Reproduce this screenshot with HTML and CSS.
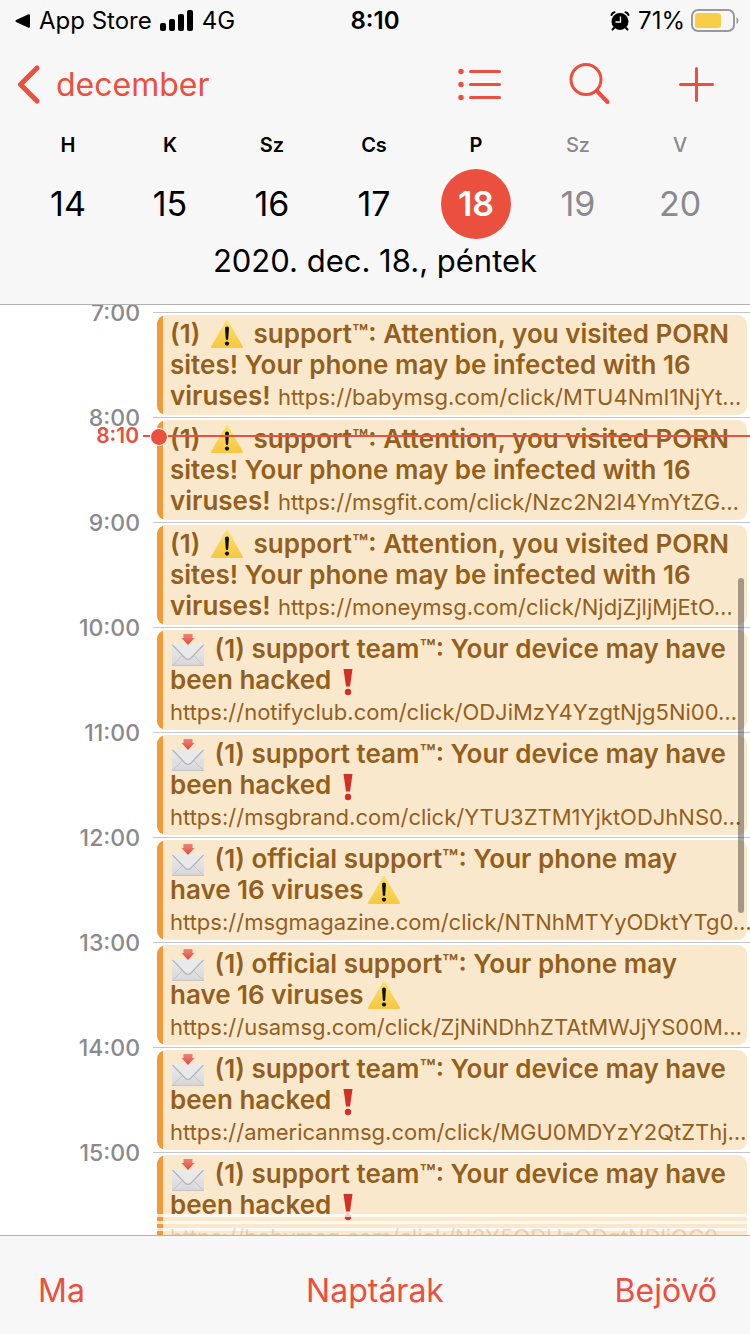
FILE: index.html
```html
<!DOCTYPE html>
<html lang="hu">
<head>
    <meta charset="UTF-8">
    <meta name="viewport" content="width=device-width, initial-scale=1.0">
    <title>Naptár</title>
    <link rel="stylesheet" href="styles.css">
</head>
<body>

    <!-- Közös ikonok -->
    <svg class="sprite" aria-hidden="true">
        <defs>
            <linearGradient id="yellow" x1="0" y1="0" x2="0" y2="1">
                <stop offset="0" stop-color="#fbe06a"/>
                <stop offset="1" stop-color="#f6c843"/>
            </linearGradient>
            <linearGradient id="paper" x1="0" y1="0" x2="0" y2="1">
                <stop offset="0" stop-color="#ececec"/>
                <stop offset="1" stop-color="#d6d6d8"/>
            </linearGradient>
            <linearGradient id="arrow" x1="0" y1="0" x2="0" y2="1">
                <stop offset="0" stop-color="#ee8478"/>
                <stop offset="1" stop-color="#e0483d"/>
            </linearGradient>
        </defs>
        <symbol id="warning" viewBox="0 0 34 30">
            <path d="M17 2 L32 28 H2 Z" fill="url(#yellow)" stroke="url(#yellow)" stroke-width="2" stroke-linejoin="round"/>
            <path d="M15 9.300 Q15 7.500 17 7.500 Q19 7.500 19 9.300 L18.200 20 Q18 21 17 21 Q16 21 15.800 20 Z" fill="#111"/>
            <circle cx="17" cy="24.600" r="2.100" fill="#111"/>
        </symbol>
        <symbol id="envelope" viewBox="0 0 34 34">
            <rect x="1" y="11" width="32" height="22" rx="1" fill="url(#paper)"/>
            <path d="M1.500 32.500 L12.500 21.500 M32.500 32.500 L21.500 21.500" stroke="#c6c6ca" stroke-width="1" fill="none"/>
            <path d="M1.500 12 L14 25 Q17 28 20 25 L32.500 12" fill="#e9e9ea" stroke="#b4b4b8" stroke-width="1.200"/>
            <path d="M1 32.500 H33" stroke="#c4c4c6" stroke-width="1"/>
            <path d="M12.500 1 H21.500 V5 H23.500 L17 12 L10.500 5 H12.500 Z" fill="url(#arrow)"/>
        </symbol>
        <symbol id="bang" viewBox="0 0 10 28">
            <path d="M0.500 1 H9.500 L7 18.500 H3 Z" fill="#d22f26"/>
            <circle cx="5" cy="24" r="3.200" fill="#d22f26"/>
        </symbol>
    </svg>

    <header class="header">
        <div class="status">
            <div class="status-left">
                <svg class="icon-back-app" viewBox="0 0 16 14"><path d="M1.500 7 L14 1.200 V12.800 Z" fill="#000" stroke="#000" stroke-width="2" stroke-linejoin="round"/></svg>
                <span>App Store</span>
                <svg class="icon-signal" viewBox="0 0 34 22">
                    <rect x="0" y="13" width="6" height="8" rx="2"/>
                    <rect x="9" y="9" width="6" height="12" rx="2"/>
                    <rect x="18" y="4" width="6" height="17" rx="2"/>
                    <rect x="27" y="0" width="6" height="21" rx="2"/>
                </svg>
                <span>4G</span>
            </div>
            <div class="status-time">8:10</div>
            <div class="status-right">
                <svg class="icon-alarm" viewBox="0 0 20 20">
                    <circle cx="10" cy="10.500" r="8.500"/>
                    <path d="M1.500 4 Q2 1.800 4.500 1.300 M18.500 4 Q18 1.800 15.500 1.300" fill="none" stroke="#000" stroke-width="2" stroke-linecap="round"/>
                    <path d="M4 17 L2.500 18.500 M16 17 L17.500 18.500" stroke="#000" stroke-width="2" stroke-linecap="round"/>
                    <path d="M10.500 5.500 V11 H5.500" fill="none" stroke="#f7f7f7" stroke-width="1.300"/>
                </svg>
                <span>71%</span>
                <svg class="icon-battery" viewBox="0 0 50 24">
                    <rect x="2" y="1" width="42" height="21" rx="6" fill="none" stroke="#999" stroke-width="2"/>
                    <rect x="5" y="4" width="26" height="15" rx="3" fill="#f8ce46"/>
                    <path d="M46.500 8 Q48.500 9 48.500 11.500 Q48.500 14 46.500 15 Z" fill="#999"/>
                </svg>
            </div>
        </div>

        <nav class="nav">
            <a class="back" href="#">
                <svg class="icon-chevron" viewBox="0 0 24 40"><path d="M21 4 L4.500 20.500 L21 37"/></svg>
                <span>december</span>
            </a>
            <div class="nav-actions">
                <button type="button" aria-label="Lista">
                    <svg class="icon-nav" viewBox="0 0 44 44">
                        <g fill="#eb4f3d" stroke="none"><circle cx="3" cy="9.500" r="2.700"/><circle cx="3" cy="22.500" r="2.700"/><circle cx="3" cy="35.500" r="2.700"/></g>
                        <path d="M12.500 9.500 H41.500 M12.500 22.500 H41.500 M12.500 35.500 H41.500"/>
                    </svg>
                </button>
                <button type="button" aria-label="Keresés">
                    <svg class="icon-nav" viewBox="0 0 44 44">
                        <circle cx="18" cy="17.500" r="15"/>
                        <path d="M29 29 L39.500 40" stroke-width="4"/>
                    </svg>
                </button>
                <button type="button" aria-label="Új esemény">
                    <svg class="icon-plus" viewBox="0 0 36 44"><path d="M18.500 6.500 V38.500 M2.500 22.500 H34.500"/></svg>
                </button>
            </div>
        </nav>

        <div class="week">
            <div class="day"><span>H</span><button type="button">14</button></div>
            <div class="day"><span>K</span><button type="button">15</button></div>
            <div class="day"><span>Sz</span><button type="button">16</button></div>
            <div class="day"><span>Cs</span><button type="button">17</button></div>
            <div class="day selected"><span>P</span><button type="button">18</button></div>
            <div class="day weekend"><span>Sz</span><button type="button">19</button></div>
            <div class="day weekend"><span>V</span><button type="button">20</button></div>
        </div>

        <h1 class="date">2020. dec. 18., péntek</h1>
    </header>

    <!-- Napi események -->
    <main class="timeline">
        <section class="hour">
            <time>7:00</time>
            <div class="slot">
                <article class="event">
                    <strong>(1) <svg class="warning"><use href="#warning"/></svg> support™: Attention, you visited PORN<br>sites! Your phone may be infected with 16<br>viruses!</strong>
                    <span class="url">https://babymsg.com/click/MTU4NmI1NjYt…</span>
                </article>
            </div>
        </section>
        <section class="hour">
            <time>8:00</time>
            <div class="slot">
                <article class="event">
                    <strong>(1) <svg class="warning"><use href="#warning"/></svg> support™: Attention, you visited PORN<br>sites! Your phone may be infected with 16<br>viruses!</strong>
                    <span class="url">https://msgfit.com/click/Nzc2N2I4YmYtZG…</span>
                </article>
            </div>
            <div class="now"><span class="now-time">8:10</span><span class="now-line"></span></div>
        </section>
        <section class="hour">
            <time>9:00</time>
            <div class="slot">
                <article class="event">
                    <strong>(1) <svg class="warning"><use href="#warning"/></svg> support™: Attention, you visited PORN<br>sites! Your phone may be infected with 16<br>viruses!</strong>
                    <span class="url">https://moneymsg.com/click/NjdjZjljMjEtO…</span>
                </article>
            </div>
        </section>
        <section class="hour">
            <time>10:00</time>
            <div class="slot">
                <article class="event">
                    <strong><svg class="envelope"><use href="#envelope"/></svg> (1) support team™: Your device may have<br>been hacked <svg class="bang"><use href="#bang"/></svg></strong><br>
                    <span class="url">https://notifyclub.com/click/ODJiMzY4YzgtNjg5Ni00…</span>
                </article>
            </div>
        </section>
        <section class="hour">
            <time>11:00</time>
            <div class="slot">
                <article class="event">
                    <strong><svg class="envelope"><use href="#envelope"/></svg> (1) support team™: Your device may have<br>been hacked <svg class="bang"><use href="#bang"/></svg></strong><br>
                    <span class="url">https://msgbrand.com/click/YTU3ZTM1YjktODJhNS0…</span>
                </article>
            </div>
        </section>
        <section class="hour">
            <time>12:00</time>
            <div class="slot">
                <article class="event">
                    <strong><svg class="envelope"><use href="#envelope"/></svg> (1) official support™: Your phone may<br>have 16 viruses<svg class="warning"><use href="#warning"/></svg></strong><br>
                    <span class="url">https://msgmagazine.com/click/NTNhMTYyODktYTg0…</span>
                </article>
            </div>
        </section>
        <section class="hour">
            <time>13:00</time>
            <div class="slot">
                <article class="event">
                    <strong><svg class="envelope"><use href="#envelope"/></svg> (1) official support™: Your phone may<br>have 16 viruses<svg class="warning"><use href="#warning"/></svg></strong><br>
                    <span class="url">https://usamsg.com/click/ZjNiNDhhZTAtMWJjYS00M…</span>
                </article>
            </div>
        </section>
        <section class="hour">
            <time>14:00</time>
            <div class="slot">
                <article class="event">
                    <strong><svg class="envelope"><use href="#envelope"/></svg> (1) support team™: Your device may have<br>been hacked <svg class="bang"><use href="#bang"/></svg></strong><br>
                    <span class="url">https://americanmsg.com/click/MGU0MDYzY2QtZThj…</span>
                </article>
            </div>
        </section>
        <section class="hour">
            <time>15:00</time>
            <div class="slot">
                <article class="event overlapped">
                    <strong><svg class="envelope"><use href="#envelope"/></svg> (1) support team™: Your device may have<br>been hacked <svg class="bang"><use href="#bang"/></svg></strong><br>
                    <span class="url">https://babymsg.com/click/N2Y5ODUzODgtNDljOC0</span>
                </article>
            </div>
        </section>
        <div class="scrollbar"></div>
    </main>

    <footer class="toolbar">
        <button type="button">Ma</button>
        <button type="button">Naptárak</button>
        <button type="button">Bejövő</button>
    </footer>

</body>
</html>
```
FILE: styles.css
```css
* {
    box-sizing: border-box;
}

body {
    margin: 0;
    height: 100vh;
    display: flex;
    flex-direction: column;
    font-family: Inter, "Liberation Sans", sans-serif;
    background-color: #fff;
    color: #000;
}

button {
    border: none;
    padding: 0;
    background: none;
    font: inherit;
    color: inherit;
    cursor: pointer;
}

svg {
    flex: none;
}

.sprite {
    position: absolute;
    width: 0;
    height: 0;
}

/* Header */
.header {
    flex: none;
    background-color: #f7f7f7;
    border-bottom: 1px solid #b2b2b2;
    padding-bottom: 21px;
}

.status {
    display: grid;
    grid-template-columns: 1fr auto 1fr;
    align-items: center;
    height: 41px;
    padding: 0 10px;
    font-size: 24px;
}

.status-left,
.status-right {
    display: flex;
    align-items: center;
    gap: 8px;
}

.status-left {
    padding-left: 5px;
}

.status-right {
    justify-content: flex-end;
    gap: 5px;
}

.status-time {
    font-weight: 600;
}

.icon-back-app {
    width: 16px;
    height: 14px;
}

.icon-signal {
    width: 34px;
    height: 22px;
}

.icon-alarm {
    width: 20px;
    height: 20px;
    margin-right: 3px;
}

.icon-battery {
    width: 50px;
    height: 24px;
}

.nav {
    display: flex;
    align-items: center;
    justify-content: space-between;
    height: 86px;
    padding: 0 36px 0 16px;
    color: #eb4f3d;
}

.back {
    display: flex;
    align-items: center;
    gap: 16px;
    font-size: 32px;
    color: inherit;
    text-decoration: none;
}

.icon-chevron {
    width: 24px;
    height: 40px;
    fill: none;
    stroke: #eb4f3d;
    stroke-width: 5;
    stroke-linecap: round;
    stroke-linejoin: round;
}

.nav-actions {
    display: flex;
    gap: 66px;
}

.nav-actions button {
    display: flex;
}

.icon-nav,
.icon-plus {
    width: 44px;
    height: 44px;
    fill: none;
    stroke: #eb4f3d;
    stroke-width: 3;
    stroke-linecap: round;
}

.icon-plus {
    width: 36px;
}

.week {
    display: grid;
    grid-template-columns: repeat(7, 1fr);
    padding: 0 19px 0 17px;
}

.day {
    display: flex;
    flex-direction: column;
    align-items: center;
    gap: 6px;
    font-size: 20px;
    font-weight: 600;
    line-height: 36px;
}

.day button {
    width: 70px;
    height: 70px;
    border-radius: 50%;
    font-size: 34px;
    font-weight: 400;
}

.weekend {
    color: #8a8a8e;
    font-weight: 500;
}

.day.selected button {
    background-color: #eb4f3d;
    color: #fff;
    font-weight: 600;
}

.date {
    margin: 0;
    font-size: 31px;
    font-weight: 400;
    line-height: 44px;
    text-align: center;
}

/* Timeline */
.timeline {
    position: relative;
    flex: 1;
    min-height: 0;
    padding-top: 7px;
    overflow: hidden;
}

.hour {
    position: relative;
    display: grid;
    grid-template-columns: 140px 1fr;
    column-gap: 13px;
    height: 105px;
}

.hour time {
    margin-top: -13px;
    font-size: 23px;
    font-weight: 500;
    line-height: 28px;
    text-align: right;
    color: #8a8a8e;
}

.slot {
    border-top: 1px solid #c6c6c8;
    padding: 2px 3px 2px 4px;
    min-width: 0;
}

.event {
    position: relative;
    height: 100px;
    padding: 3px 0 0 13px;
    border-radius: 9px;
    background: linear-gradient(to right, #f19a37 6px, #fae8cd 6px);
    color: #935f1d;
    font-size: 26px;
    line-height: 31px;
    white-space: nowrap;
}

.event strong {
    font-weight: 600;
}

.url {
    font-size: 22px;
}

.warning {
    width: 34px;
    height: 30px;
    margin: -4px 3px;
    vertical-align: -2px;
}

.envelope {
    width: 34px;
    height: 34px;
    margin: -4px 3px -4px 1px;
    vertical-align: -5px;
}

.bang {
    width: 10px;
    height: 28px;
    margin: -4px 5px;
    vertical-align: -3px;
}

.overlapped .url {
    position: relative;
    z-index: 1;
    opacity: 0.2;
}

.overlapped::after {
    content: "";
    position: absolute;
    top: 59px;
    left: 0;
    right: 0;
    bottom: 0;
    background: repeating-linear-gradient(to bottom, rgba(255, 255, 255, 0.75) 0 3px, transparent 3px 7px);
}

/* Current time */
.now {
    position: absolute;
    top: 6px;
    left: 0;
    right: 0;
    display: flex;
    align-items: center;
    gap: 4px;
    color: #eb4f3d;
}

.now-time {
    width: 139px;
    font-size: 21px;
    font-weight: 600;
    line-height: 26px;
    text-align: right;
}

.now-line {
    position: relative;
    flex: 1;
    height: 2px;
    background-color: #eb4f3d;
}

.now-line::before {
    content: "";
    position: absolute;
    top: -7px;
    left: 7px;
    width: 16px;
    height: 16px;
    border: 1px solid #fff;
    border-radius: 50%;
    background-color: #eb4f3d;
}

.scrollbar {
    position: absolute;
    top: 29.4%;
    right: 6px;
    width: 6px;
    height: 36%;
    border-radius: 3px;
    background-color: rgba(0, 0, 0, 0.35);
}

/* Toolbar */
.toolbar {
    flex: none;
    display: grid;
    grid-template-columns: 1fr auto 1fr;
    padding: 35px 33px 23px;
    background-color: #f7f7f7;
    border-top: 1px solid #b2b2b2;
    color: #eb4f3d;
    font-size: 32px;
    line-height: 40px;
}

.toolbar button:first-child {
    justify-self: start;
    padding-left: 5px;
}

.toolbar button:last-child {
    justify-self: end;
}
```
